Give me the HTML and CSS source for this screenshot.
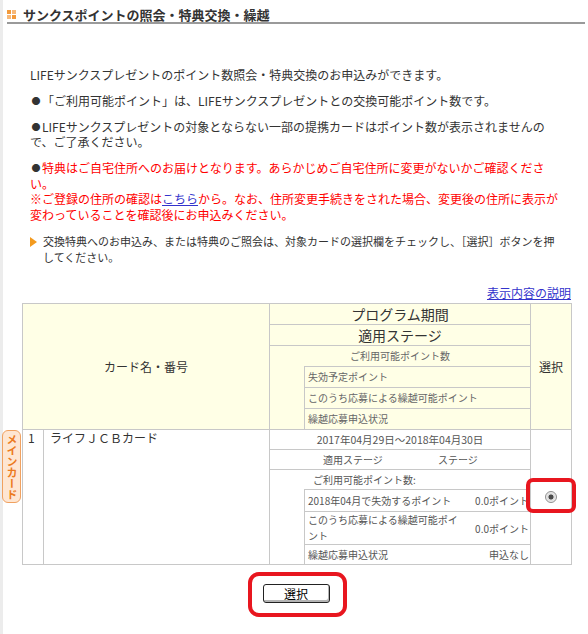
FILE: index.html
```html
<!DOCTYPE html>
<html lang="ja">
<head>
<meta charset="utf-8">
<title>サンクスポイントの照会・特典交換・繰越</title>
<link rel="stylesheet" href="styles.css">
</head>
<body>
<div class="page">
  <h1 class="title"><span class="title-icon"><i class="sq dark"></i><i class="sq light"></i><i class="sq light"></i><i class="sq dark"></i></span>サンクスポイントの照会・特典交換・繰越</h1>
  <div class="intro">
    <p>LIFEサンクスプレゼントのポイント数照会・特典交換のお申込みができます。</p>
    <p><span class="dot">●</span>「ご利用可能ポイント」は、LIFEサンクスプレゼントとの交換可能ポイント数です。</p>
    <p><span class="dot">●</span>LIFEサンクスプレゼントの対象とならない一部の提携カードはポイント数が表示されませんの<br>で、ご了承ください。</p>
    <p class="notice"><span class="dot">●</span>特典はご自宅住所へのお届けとなります。あらかじめご自宅住所に変更がないかご確認くださ<br>い。<br>※ご登録の住所の確認は<a href="#">こちら</a>から。なお、住所変更手続きをされた場合、変更後の住所に表示が<br>変わっていることを確認後にお申込みください。</p>
    <div class="guide">
      <svg class="guide-mark" width="7" height="10" viewBox="0 0 7 10"><polygon points="0,0 7,5 0,10" fill="#f39a1e"/></svg>
      <p class="guide-text">交換特典へのお申込み、または特典のご照会は、対象カードの選択欄をチェックし、［選択］ボタンを押<br>してください。</p>
    </div>
  </div>
  <div class="cards-area">
    <div class="help"><a href="#">表示内容の説明</a></div>
    <div class="cards">
      <div class="cell head name-head">カード名・番号</div>
      <div class="cell head prog">
        <div class="prog-row big">プログラム期間</div>
        <div class="prog-row big">適用ステージ</div>
        <div class="avail head-avail">ご利用可能ポイント数</div>
        <div class="sub head-sub">
          <div class="sub-row">失効予定ポイント</div>
          <div class="sub-row">このうち応募による繰越可能ポイント</div>
          <div class="sub-row last">繰越応募申込状況</div>
        </div>
      </div>
      <div class="cell head sel-head">選択</div>

      <div class="cell num">1</div>
      <div class="cell card-name">ライフＪＣＢカード</div>
      <div class="cell prog">
        <div class="prog-row date">2017年04月29日～2018年04月30日</div>
        <div class="prog-row stage"><span class="stage-label">適用ステージ</span><span>ステージ</span></div>
        <div class="avail body-avail">ご利用可能ポイント数:</div>
        <div class="sub body-sub">
          <div class="sub-row pair r1"><span class="lbl">2018年04月で失効するポイント</span><span class="val">0.0ポイント</span></div>
          <div class="sub-row pair r2"><span class="lbl">このうち応募による繰越可能ポイ<br>ント</span><span class="val">0.0ポイント</span></div>
          <div class="sub-row pair r3 last"><span class="lbl">繰越応募申込状況</span><span class="val">申込なし</span></div>
        </div>
      </div>
      <div class="cell sel"><span class="radio"></span></div>

      <div class="main-tag">メインカード</div>
      <div class="radio-mark"></div>
    </div>
    <div class="btn-wrap"><span class="btn-mark"><button class="select-btn" type="button">選択</button></span></div>
  </div>
</div>
</body>
</html>
```
FILE: styles.css
```css
* { box-sizing: border-box; }
html, body { margin: 0; padding: 0; background: #fff; }
body {
  font-family: "Noto Sans CJK JP", "Noto Sans", sans-serif;
  color: #333;
  font-size: 12px;
  line-height: 15px;
}
a { color: #3333cc; text-decoration: underline; }

.page {
  width: 588px;
  min-height: 634px;
  border-left: 3px solid #ececec;
}

/* title */
.title {
  margin: 0 3px 0 4px;
  height: 24px;
  padding-top: 7px;
  border-bottom: 2px solid #9a9a9a;
  font-size: 13px;
  line-height: 15px;
  font-weight: bold;
  color: #333;
  display: flex;
  align-items: flex-start;
}
.title-icon {
  display: grid;
  grid-template-columns: 4px 4px;
  grid-template-rows: 4px 4px;
  gap: 1px;
  margin-top: 3px;
  margin-right: 7px;
}
.sq { display: block; }
.sq.dark { background: #f29a3c; }
.sq.light { background: #f7b878; }

/* intro */
.intro { padding: 43px 0 0 27px; }
.intro p { margin: 0 0 11px; }
.dot {
  display: inline-block;
  width: 12px;
  font-size: 9px;
  text-align: center;
  color: #333;
  vertical-align: top;
}
.notice { color: #ff0000; line-height: 15.5px; }
.notice a { color: #3333cc; }
.guide { display: flex; align-items: flex-start; }
.guide-mark { margin-top: 4px; margin-right: 6px; flex: none; }
.intro .guide-text { margin: 0; font-size: 11px; line-height: 16px; }

/* cards */
.cards-area { margin-left: 19px; width: 550px; padding-top: 20px; }
.help { text-align: right; padding-right: 1px; margin-bottom: 3px; line-height: 15px; }

.cards {
  position: relative;
  display: grid;
  grid-template-columns: 21px 226px 261px 41px;
  grid-template-rows: 126px 135px;
  width: 550px;
  border-left: 1px solid #c8c8c8;
  border-top: 1px solid #c8c8c8;
}
.cell {
  border-right: 1px solid #c8c8c8;
  border-bottom: 1px solid #c8c8c8;
}
.head { background: #ffffe6; }
.name-head {
  grid-column: span 2;
  display: flex;
  align-items: center;
  justify-content: center;
}
.sel-head, .sel {
  display: flex;
  align-items: center;
  justify-content: center;
}
.prog { display: flex; flex-direction: column; }
.prog-row { border-bottom: 1px solid #c8c8c8; }
.prog-row.big {
  height: 21px;
  font-size: 14px;
  line-height: 20px;
  text-align: center;
}
.avail { font-size: 10px; color: #666; }
.head-avail { height: 20px; line-height: 20px; text-align: center; }
.sub {
  margin-left: 34px;
  border-left: 1px solid #c8c8c8;
  border-top: 1px solid #c8c8c8;
  flex: 1;
  display: flex;
  flex-direction: column;
}
.sub-row {
  border-bottom: 1px solid #c8c8c8;
  font-size: 10px;
  color: #666;
  padding-left: 3px;
}
.sub-row.last { border-bottom: 0; }
.head-sub .sub-row { height: 21px; line-height: 20px; }
.head-sub .sub-row.last { height: 20px; }

.num { padding-left: 5px; }
.card-name { padding-left: 6px; }

.prog-row.date {
  height: 20px;
  line-height: 19px;
  font-size: 10.5px;
  color: #555;
  text-align: center;
}
.prog-row.stage {
  height: 20px;
  line-height: 19px;
  font-size: 10px;
  color: #555;
  padding-left: 53px;
  display: flex;
}
.stage-label { width: 115px; }
.body-avail { height: 19px; line-height: 19px; padding-left: 43px; color: #555; }
.pair {
  display: flex;
  align-items: center;
  justify-content: space-between;
  padding-right: 1px;
  color: #555;
}
.pair.r1 { height: 22px; }
.pair.r2 { height: 33px; }
.pair.r3 { height: 19px; }
.lbl { line-height: 16px; }
.val { white-space: nowrap; }

.radio {
  width: 12px;
  height: 12px;
  border-radius: 50%;
  border: 1px solid #8e8e8e;
  background: radial-gradient(circle, #4a4a4a 0, #4a4a4a 2.2px, #d6d6d6 2.8px, #eeeeee 5px);
}

.main-tag {
  position: absolute;
  left: -21px;
  top: 126px;
  width: 19px;
  height: 73px;
  border: 1.5px solid #f0a160;
  border-radius: 6px;
  background: #fee6d2;
  color: #ec7a20;
  font-size: 11px;
  font-weight: bold;
  line-height: 16px;
  writing-mode: vertical-rl;
  text-orientation: upright;
  text-align: center;
}
.radio-mark {
  position: absolute;
  left: 503px;
  top: 174px;
  width: 50px;
  height: 35px;
  border: 4px solid #e8161f;
  border-radius: 7px;
}

.btn-wrap { text-align: center; margin-top: 7px; line-height: 0; }
.btn-mark {
  display: inline-block;
  border: 4px solid #e8161f;
  border-radius: 11px;
  padding: 8px 13px 10px 11px;
}
.select-btn {
  display: block;
  width: 67px;
  height: 19px;
  padding: 0;
  border: 1px solid #222;
  border-radius: 3px;
  background: #fff;
  box-shadow: inset -1px -2px 0 #b4b4b4;
  font-family: "Noto Sans CJK JP", sans-serif;
  font-size: 12px;
  line-height: 16px;
  color: #000;
}
```
